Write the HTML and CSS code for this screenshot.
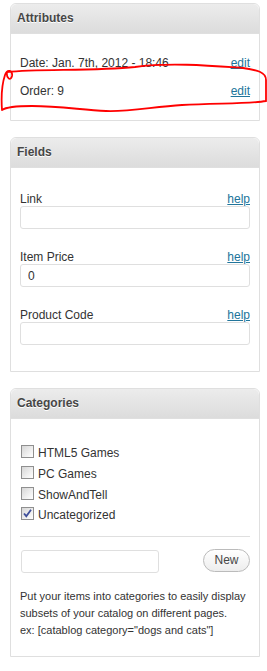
FILE: index.html
```html
<!DOCTYPE html>
<html lang="en">
<head>
    <meta charset="UTF-8">
    <meta name="viewport" content="width=device-width, initial-scale=1.0">
    <title>Catalog Item Sidebar</title>
    <link rel="stylesheet" href="styles.css">
</head>
<body>
    <div class="sidebar">
        <!-- Attributes box -->
        <div class="postbox">
            <h3 class="hndle">Attributes</h3>
            <div class="inside attributes">
                <div class="attr-row">
                    <span>Date: Jan. 7th, 2012 - 18:46</span>
                    <a href="#">edit</a>
                </div>
                <div class="attr-row">
                    <span>Order: 9</span>
                    <a href="#">edit</a>
                </div>
            </div>
        </div>

        <!-- Fields box -->
        <div class="postbox">
            <h3 class="hndle">Fields</h3>
            <div class="inside fields">
                <div class="field">
                    <div class="field-label"><span>Link</span><a href="#">help</a></div>
                    <input type="text" value="">
                </div>
                <div class="field">
                    <div class="field-label"><span>Item Price</span><a href="#">help</a></div>
                    <input type="text" value="0">
                </div>
                <div class="field">
                    <div class="field-label"><span>Product Code</span><a href="#">help</a></div>
                    <input type="text" value="">
                </div>
            </div>
        </div>

        <!-- Categories box -->
        <div class="postbox">
            <h3 class="hndle">Categories</h3>
            <div class="inside categories">
                <ul class="cat-list">
                    <li><span class="check"></span>HTML5 Games</li>
                    <li><span class="check"></span>PC Games</li>
                    <li><span class="check"></span>ShowAndTell</li>
                    <li><span class="check checked"><svg viewBox="0 0 11 11" width="11" height="11"><path d="M2 5.5 L4.3 8.2 L9 1.8" fill="none" stroke="#3f4f9a" stroke-width="1.8"/></svg></span>Uncategorized</li>
                </ul>
                <div class="new-cat">
                    <input type="text" value="">
                    <button>New</button>
                </div>
                <p class="cat-help">Put your items into categories to easily display subsets of your catalog on different pages.<br>ex: [catablog category="dogs and cats"]</p>
            </div>
        </div>
    </div>

    <!-- hand drawn red mark around the order row -->
    <svg class="scribble" width="267" height="130" viewBox="0 0 267 130">
        <path d="M2 110 C1 96, 2 84, 5 75 C7 69, 13 70, 12 76 C11 81, 6 79, 7 72 C40 69, 95 71, 135 67 C170 62, 215 66, 243 68 C257 70, 266 72, 266 80 L266 101 C250 104, 215 103, 182 105 C152 107, 128 112, 106 111 C82 110, 60 106, 32 106 C16 106, 6 107, 2 110" fill="none" stroke="#ff0000" stroke-width="1.8" stroke-linecap="round"/>
    </svg>
</body>
</html>
```

FILE: styles.css
```css
body {
    font-family: 'Liberation Sans', Arial, sans-serif;
    font-size: 12px;
    color: #333;
    margin: 0;
    padding: 3px 8px 0 10px;
    background: #fff;
    position: relative;
}

.sidebar {
    width: 250px;
}

.postbox {
    border: 1px solid #dfdfdf;
    border-radius: 6px 6px 0 0;
    background: #fff;
    margin-bottom: 16px;
}

.hndle {
    margin: 0;
    height: 29px;
    line-height: 29px;
    padding: 0 6px;
    font-size: 12px;
    font-weight: bold;
    color: #464646;
    text-shadow: 0 1px 0 #fff;
    background: linear-gradient(#ececec, #dcdcdc);
    border-bottom: 1px solid #dfdfdf;
    border-radius: 6px 6px 0 0;
}

.inside {
    padding: 0 9px;
}

a {
    color: #21759b;
    text-decoration: underline;
}

/* attributes */
.attributes {
    padding-top: 15px;
    padding-bottom: 15px;
}

.attr-row {
    display: flex;
    justify-content: space-between;
    height: 28px;
    line-height: 28px;
}

/* fields */
.fields {
    padding-top: 21px;
    padding-bottom: 8px;
}

.field {
    margin-bottom: 18px;
}

.field-label {
    display: flex;
    justify-content: space-between;
    align-items: flex-end;
    height: 17px;
    line-height: 14px;
}

input[type="text"] {
    display: block;
    box-sizing: border-box;
    width: 100%;
    height: 23px;
    margin: 0;
    padding: 0 7px;
    border: 1px solid #dfdfdf;
    border-radius: 3px;
    font-family: 'Liberation Sans', Arial, sans-serif;
    font-size: 12px;
    color: #333;
    background: #fff;
}

/* categories */
.categories {
    padding-top: 24px;
    padding-bottom: 17px;
}

.cat-list {
    list-style: none;
    margin: 0;
    padding: 0 0 10px 1px;
    border-bottom: 1px solid #dfdfdf;
}

.cat-list li {
    display: flex;
    align-items: center;
    height: 20.7px;
    line-height: 20px;
}

.check {
    box-sizing: border-box;
    width: 13px;
    height: 13px;
    margin: -3px 4px 0 0;
    border: 1px solid #8f8f8f;
    background: linear-gradient(135deg, #d6d6d6, #f4f4f4 70%, #fff);
    display: flex;
    align-items: center;
    justify-content: center;
}

.new-cat {
    display: flex;
    justify-content: space-between;
    align-items: center;
    margin-top: 13px;
}

.new-cat input[type="text"] {
    width: 138px;
    margin-left: 1px;
}

.new-cat button {
    height: 23px;
    width: 47px;
    margin-top: -2px;
    padding: 0;
    border: 1px solid #bbb;
    border-radius: 12px;
    background: linear-gradient(#fff, #ededed);
    color: #464646;
    font-family: 'Liberation Sans', Arial, sans-serif;
    font-size: 12px;
}

.cat-help {
    margin: 15px 0 0;
    font-size: 11px;
    line-height: 17px;
    color: #333;
}

.scribble {
    position: absolute;
    left: 0;
    top: 0;
}
```
